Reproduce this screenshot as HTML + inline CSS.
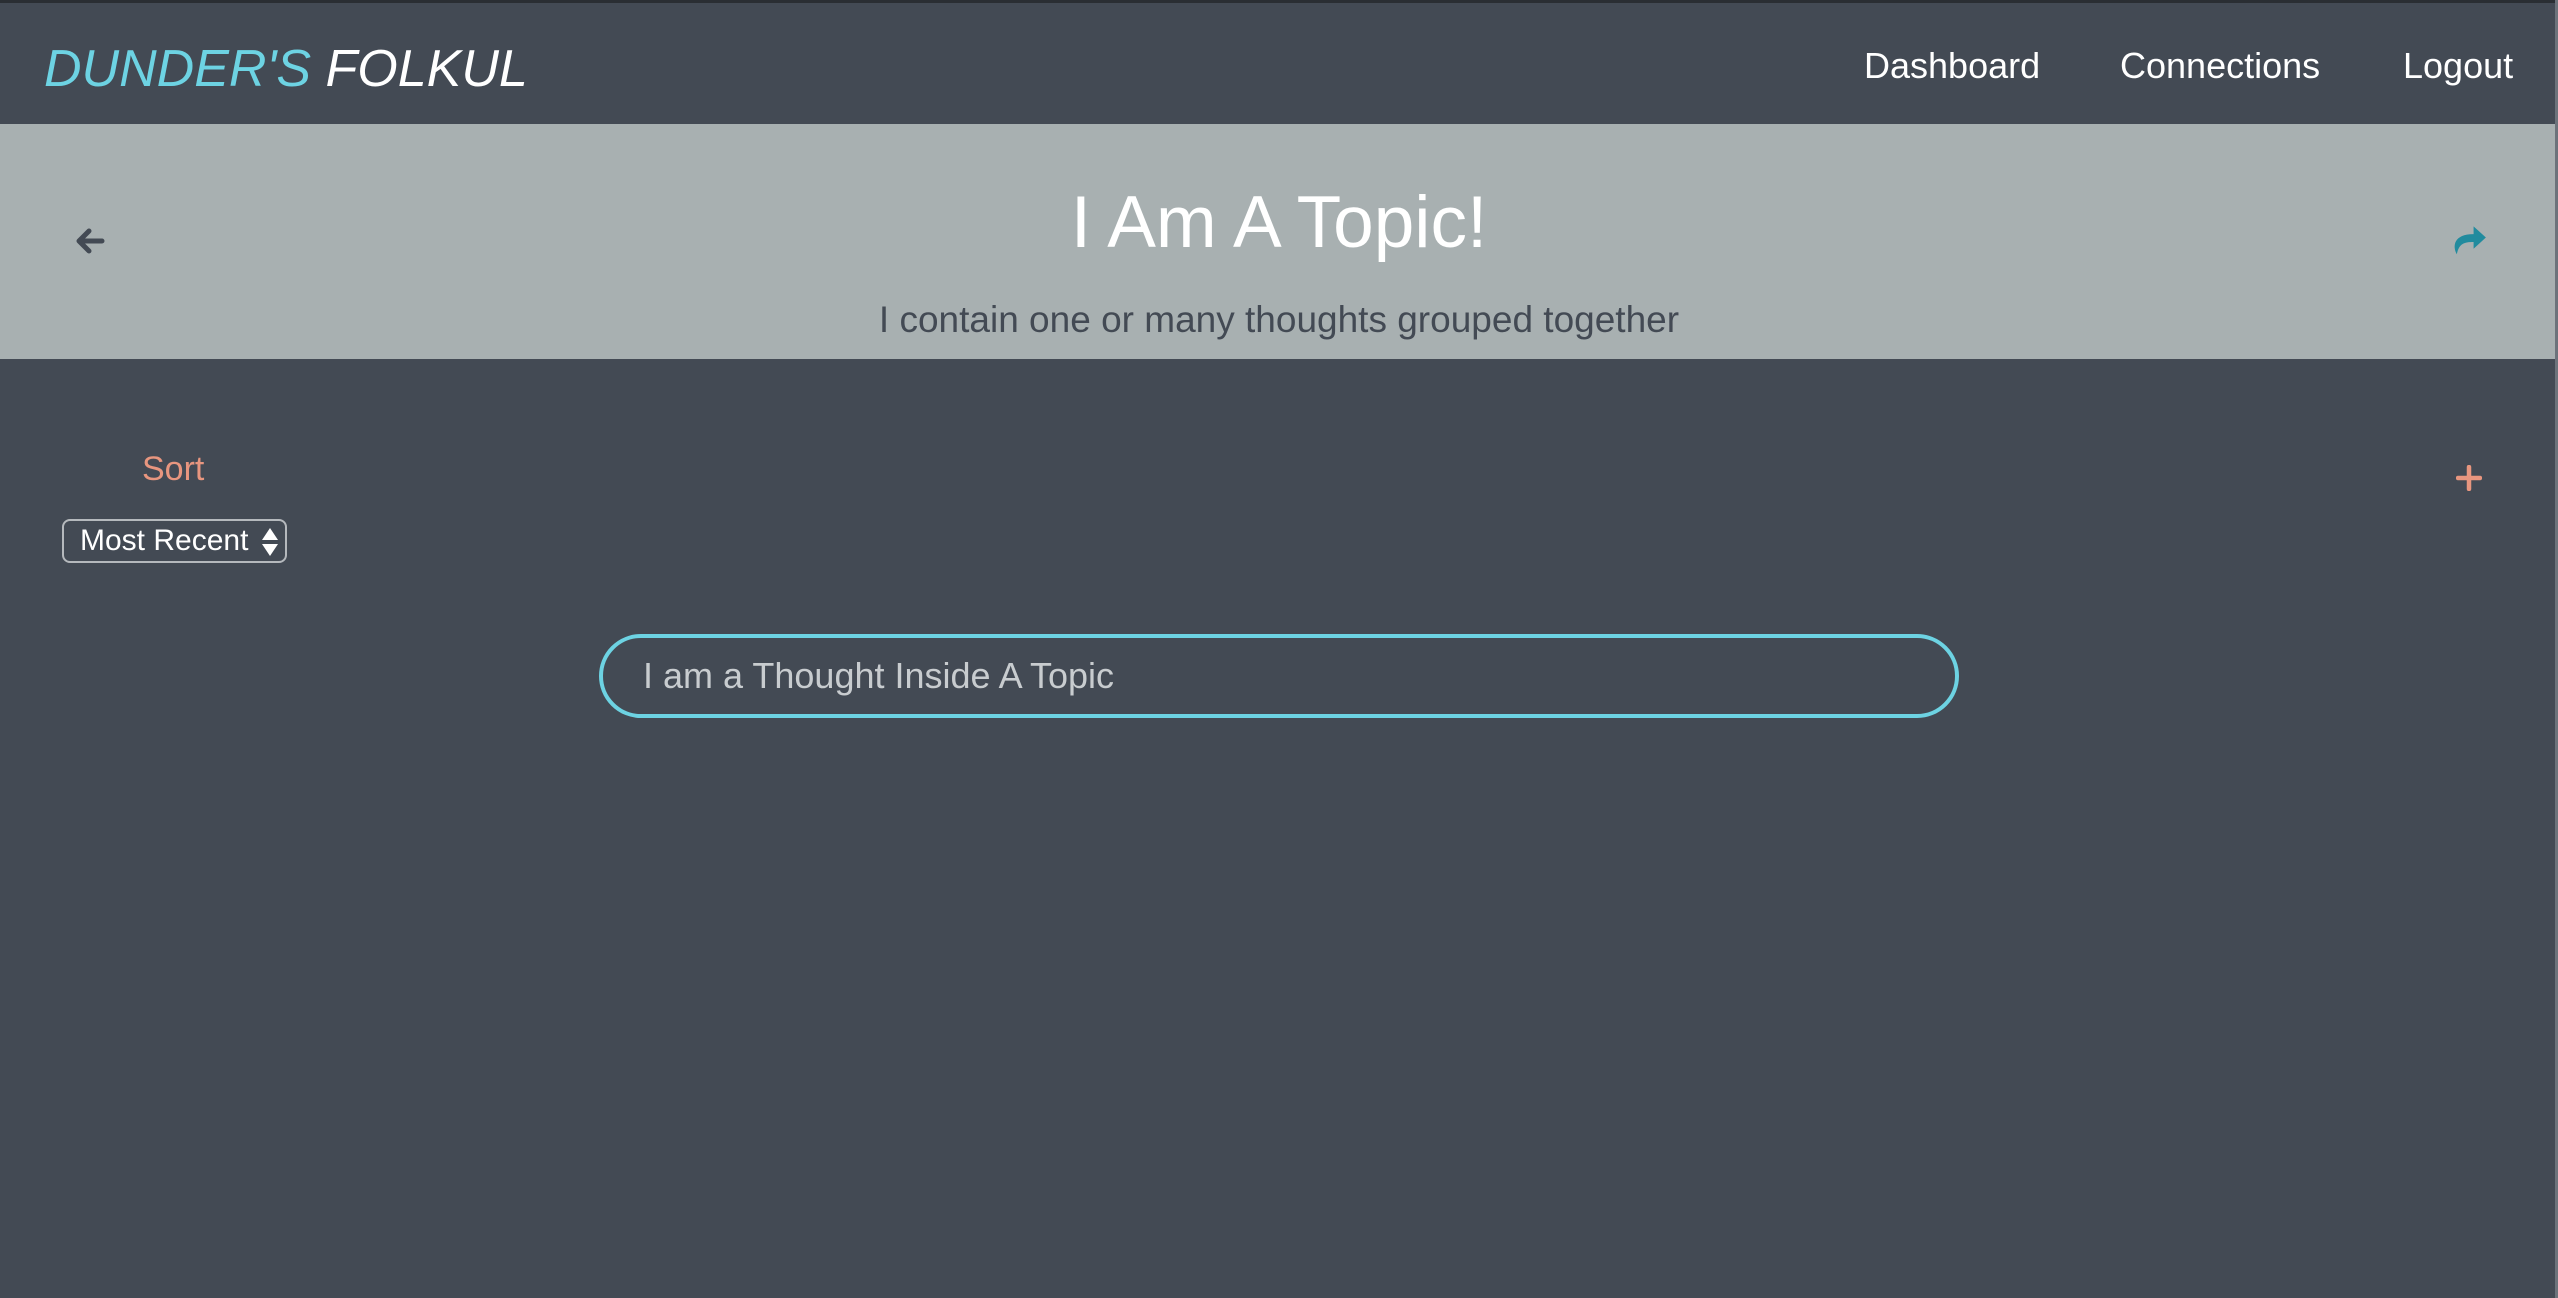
<!DOCTYPE html>
<html><head><meta charset="utf-8"><style>
html,body{margin:0;padding:0;width:2558px;height:1298px;overflow:hidden;background:#434a54;font-family:"Liberation Sans",sans-serif;}
.nav{position:absolute;left:0;top:0;width:2558px;height:124px;background:#434a54;border-top:3px solid #2a2e33;box-sizing:border-box;}
.logo{position:absolute;left:44px;top:36px;font-size:52px;font-style:italic;line-height:60px;white-space:nowrap;}
.logo .a{color:#6dd3e3}.logo .b{color:#fff}
.nl{position:absolute;top:42px;color:#fff;font-size:36px;line-height:42px;white-space:nowrap;}
.band{position:absolute;left:0;top:124px;width:2558px;height:235px;background:#a8b0b1;}
.title{position:absolute;left:0;width:2558px;text-align:center;top:180px;font-size:73px;line-height:86px;color:#fff;}
.sub{position:absolute;left:0;width:2558px;text-align:center;top:298px;font-size:37px;line-height:44px;color:#434a54;}
.sort{position:absolute;left:142px;top:449px;font-size:34px;line-height:40px;color:#e8967f;}
.sel{position:absolute;left:62px;top:519px;width:225px;height:44px;box-sizing:border-box;border:2px solid #b5b9bd;border-radius:8px;color:#fff;font-size:30px;line-height:40px;padding-left:16px;white-space:nowrap;}
.inp{position:absolute;left:599px;top:634px;width:1360px;height:84px;box-sizing:border-box;border:4px solid #6dd3e3;border-radius:42px;color:#c8cccf;font-size:36px;line-height:76px;padding-left:40px;}
.edge{position:absolute;right:0;top:0;width:3px;height:1298px;background:#6c737b;}
</style></head><body>
<div class="nav">
<div class="logo"><span class="a">DUNDER'S</span> <span class="b">FOLKUL</span></div>
<div class="nl" style="left:1864px">Dashboard</div>
<div class="nl" style="left:2120px">Connections</div>
<div class="nl" style="left:2403px">Logout</div>
</div>
<div class="band"></div>
<div class="title">I Am A Topic!</div>
<div class="sub">I contain one or many thoughts grouped together</div>
<svg style="position:absolute;left:74px;top:226px" width="32" height="30" viewBox="0 0 32 30"><path d="M28 15H6M15 5L5 15l10 10" fill="none" stroke="#434a54" stroke-width="5" stroke-linecap="round" stroke-linejoin="round"/></svg>
<svg style="position:absolute;left:2449px;top:224px" width="38" height="36" viewBox="0 0 34 32"><path d="M22 2L33 12 22 22V16C14 16 9 17 7 27 3 20 4 9 22 9Z" fill="#218b9e"/></svg>
<div class="sort">Sort</div>
<div class="sel">Most Recent <svg style="position:absolute;right:6px;top:6px" width="18" height="30" viewBox="0 0 18 30"><path d="M9 1L17 13H1Z M9 29L1 17H17Z" fill="#fff"/></svg></div>
<svg style="position:absolute;left:2456px;top:465px" width="26" height="26" viewBox="0 0 26 26"><path d="M13 2V24M2 13H24" stroke="#e8967f" stroke-width="4.5" stroke-linecap="round"/></svg>
<div class="inp">I am a Thought Inside A Topic</div>
<div class="edge"></div>
</body></html>
